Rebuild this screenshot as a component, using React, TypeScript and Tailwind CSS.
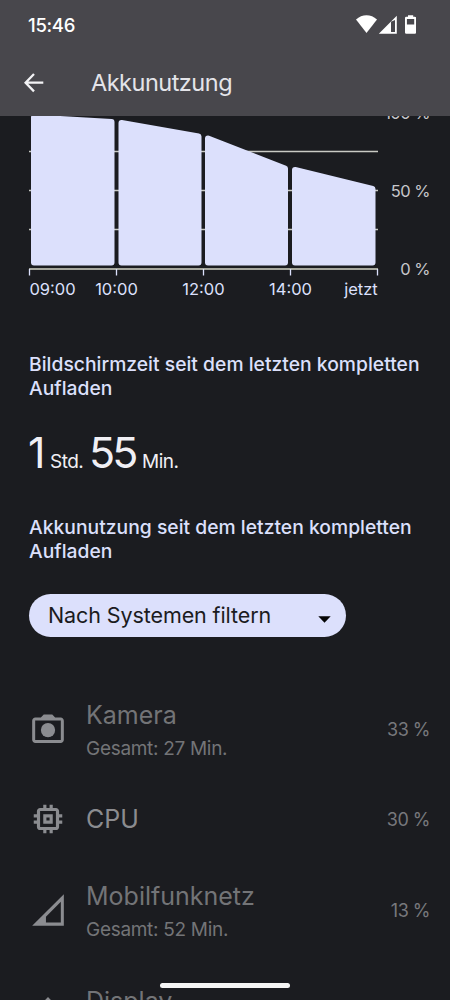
import type { ReactNode } from "react";

const CHART_BARS = [
	"34,117.5 111.5,122 111.5,262.5 34,262.5",
	"121.5,123 198.5,136.5 198.5,262.5 121.5,262.5",
	"208,138.5 285,168.5 285,262.5 208,262.5",
	"295,170 372.5,189 372.5,262.5 295,262.5",
];

export default function App() {
	return (
		<div className="relative flex h-[1000px] w-[450px] flex-col overflow-hidden bg-[#1b1c20] font-['Inter','Roboto',sans-serif] text-[#e4e4e9]">
			<header className="h-[116px] shrink-0 bg-[#48474c]">
				<StatusBar />
				<div className="flex h-[66px] items-center pl-[24px]">
					<BackIcon />
					<h1 className="ml-[47px] text-[23.5px] tracking-[-0.5px]">
						Akkunutzung
					</h1>
				</div>
			</header>

			<BatteryChart />

			<main className="flex flex-col pt-[36px]">
				<SectionTitle>
					Bildschirmzeit seit dem letzten kompletten
					<br />
					Aufladen
				</SectionTitle>

				<p className="mt-[26px] flex h-[52px] items-baseline pl-[28px] text-[19px] leading-[52px] text-[#f0eff4]">
					<span className="w-[22px] text-[43px]">1</span>
					<span className="w-[39px] tracking-[-0.5px]">Std.</span>
					<span className="w-[53px] text-[43px] tracking-[-3px]">
						55
					</span>
					<span className="tracking-[-0.5px]">Min.</span>
				</p>

				<div className="mt-[37px]">
					<SectionTitle>
						Akkunutzung seit dem letzten kompletten
						<br />
						Aufladen
					</SectionTitle>
				</div>

				<button className="mt-[31px] ml-[29px] flex h-[43px] w-[316.5px] items-center justify-between rounded-full bg-[#dce0fc] pr-[15px] pl-[19px] text-[21.5px] text-[#1b1b20]">
					<span className="tracking-[-0.1px]">
						Nach Systemen filtern
					</span>
					<svg width="13" height="7" viewBox="0 0 13 7" className="mt-[7px]">
						<path d="M0.3 0.3h12.4L6.5 6.8z" fill="#050505" />
					</svg>
				</button>

				{/* System usage list */}
				<ul className="mt-[39px]">
					<UsageRow
						icon={<CameraIcon />}
						name="Kamera"
						detail="Gesamt: 27 Min."
						percent="33 %"
					/>
					<UsageRow icon={<CpuIcon />} name="CPU" percent="30 %" />
					<UsageRow
						icon={<NetworkIcon />}
						name="Mobilfunknetz"
						detail="Gesamt: 52 Min."
						percent="13 %"
					/>
					<UsageRow
						icon={<BrightnessIcon />}
						name="Display"
						detail="Gesamt: 1 Std."
						percent="12 %"
					/>
				</ul>
			</main>

			<div className="absolute bottom-[12px] left-[160px] h-[5px] w-[130px] rounded-full bg-[#f5f5f5]" />
		</div>
	);
}

function StatusBar() {
	return (
		<div className="flex h-[50px] items-center justify-between pr-[34px] pl-[28px] text-white">
			<span className="pt-px text-[18.5px] font-medium tracking-[-0.3px]">
				15:46
			</span>
			<svg width="60" height="20" viewBox="356 15 60 20" fill="#fff">
				<path d="M356 19.5C362 13.8 371 13.8 377 19.5L366.500 33z" />
				<path
					fillRule="evenodd"
					d="M378.800 33.700L396.800 15.700V33.700zM391 21.800V31.900H395V20z"
				/>
				<path
					fillRule="evenodd"
					d="M408 15.300h5.200v1.500h1.700a1.300 1.300 0 0 1 1.300 1.300v14.300a1.300 1.300 0 0 1-1.300 1.300h-8.600a1.300 1.300 0 0 1-1.300-1.300V18.100a1.300 1.300 0 0 1 1.300-1.300H408zM406.900 19v5.500h7.300V19z"
				/>
			</svg>
		</div>
	);
}

function BatteryChart() {
	return (
		<svg
			width="450"
			height="200"
			viewBox="0 116 450 200"
			className="shrink-0"
			fontSize="16.5"
		>
			<path
				d="M29 151.500H378M29 190.500H378M29 229.500H378"
				stroke="#c9cac4"
				strokeWidth="1.3"
			/>
			<g
				fill="#dce0fc"
				stroke="#dce0fc"
				strokeWidth="6"
				strokeLinejoin="round"
			>
				{CHART_BARS.map((points) => (
					<polygon key={points} points={points} />
				))}
			</g>
			<path d="M29 269H378" stroke="#a5a69c" strokeWidth="2" />
			<path
				d="M29.500 269v6.500M116.500 269v6.500M203.500 269v6.500M290.500 269v6.500M377.500 269v6.500"
				stroke="#dce0fc"
				strokeWidth="1.3"
			/>
			<g fill="#c7c7cb" textAnchor="end" letterSpacing="-0.5">
				<text x="430" y="119">
					100 %
				</text>
				<text x="430" y="197">
					50 %
				</text>
				<text x="430" y="275">
					0 %
				</text>
			</g>
			<g fill="#dce0fc" textAnchor="middle">
				<text x="52.500" y="295">
					09:00
				</text>
				<text x="116.500" y="295">
					10:00
				</text>
				<text x="203.500" y="295">
					12:00
				</text>
				<text x="290.500" y="295">
					14:00
				</text>
				<text x="361" y="295">
					jetzt
				</text>
			</g>
		</svg>
	);
}

function SectionTitle({ children }: { children: ReactNode }) {
	return (
		<h2 className="pl-[29px] text-[19.3px] leading-[24px] font-medium tracking-[0.02px] whitespace-nowrap text-[#dce0fc]">
			{children}
		</h2>
	);
}

type UsageRowProps = {
	icon: ReactNode;
	name: string;
	detail?: string;
	percent: string;
};

function UsageRow({ icon, name, detail, percent }: UsageRowProps) {
	return (
		<li
			className={`flex items-center pr-[20px] pl-[29px] ${detail ? "h-[105px] text-[#737477]" : "h-[76px] text-[#8b8c90]"}`}
		>
			<span className="w-[57px] text-[#8b8c90]">{icon}</span>
			<div className={detail ? "flex-1 pt-[5px]" : "flex-1"}>
				<p className="text-[25px] leading-[34px]">{name}</p>
				{detail && (
					<p className="text-[19px] leading-[33px] tracking-[-0.3px]">
						{detail}
					</p>
				)}
			</div>
			<span className="pt-px text-[18px] tracking-[-0.5px] text-[#77787c]">
				{percent}
			</span>
		</li>
	);
}

function BackIcon() {
	return (
		<svg
			width="20"
			height="20"
			viewBox="0 0 20 20"
			fill="none"
			stroke="#f3f3f5"
			strokeWidth="2.300"
		>
			<path d="M10 1L1.600 9.700L10 18.400M1.600 9.700H19.300" />
		</svg>
	);
}

function CameraIcon() {
	return (
		<svg width="38" height="38" viewBox="0 0 24 24" fill="currentColor">
			<path
				fillRule="evenodd"
				d="M9.300 2.900L7.500 4.800H4c-1.100 0-2 .900-2 2v12c0 1.100.900 2 2 2h16c1.100 0 2-.900 2-2v-12c0-1.100-.900-2-2-2h-3.500L14.700 2.900zM3.900 6.700h16.200v12.200H3.900z"
			/>
			<circle cx="12" cy="12.700" r="4.500" />
		</svg>
	);
}

function CpuIcon() {
	return (
		<svg width="38" height="38" viewBox="0 0 24 24" fill="currentColor">
			<path
				fillRule="evenodd"
				d="M15 9H9v6h6V9zm-2 4h-2v-2h2v2zm8-2V9h-2V7c0-1.100-.900-2-2-2h-2V3h-2v2h-2V3H9v2H7c-1.100 0-2 .900-2 2v2H3v2h2v2H3v2h2v2c0 1.100.900 2 2 2h2v2h2v-2h2v2h2v-2h2c1.100 0 2-.900 2-2v-2h2v-2h-2v-2h2zm-4 6H7V7h10v10z"
			/>
		</svg>
	);
}

function NetworkIcon() {
	return (
		<svg width="38" height="38" viewBox="0 0 24 24" fill="currentColor">
			<path
				fillRule="evenodd"
				d="M2 22h20V2zM20.100 6.800V19.900H10.700V16.200z"
			/>
		</svg>
	);
}

function BrightnessIcon() {
	return (
		<svg width="38" height="38" viewBox="0 0 24 24" fill="currentColor">
			<path d="M20 8.690V4h-4.690L12 .690 8.690 4H4v4.690L.690 12 4 15.310V20h4.690L12 23.310 15.310 20H20v-4.690L23.310 12z" />
		</svg>
	);
}
